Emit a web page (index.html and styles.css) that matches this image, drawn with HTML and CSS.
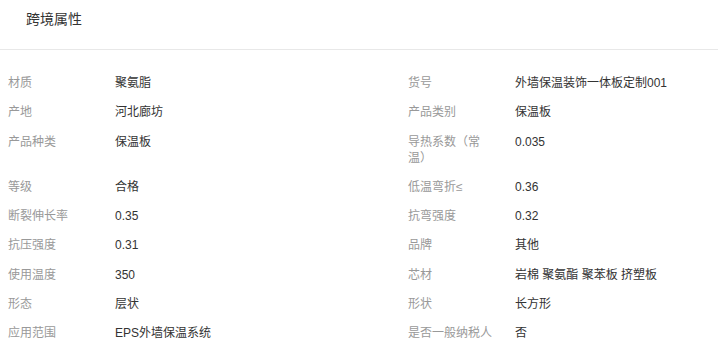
FILE: index.html
```html
<!DOCTYPE html>
<html lang="zh-CN">
<head>
<meta charset="utf-8">
<title>跨境属性</title>
<link rel="stylesheet" href="styles.css">
</head>
<body>
<div class="panel">
  <div class="panel-head"><span class="panel-title">跨境属性</span></div>
  <div class="attr-list">
    <div class="attr"><div class="attr-label">材质</div><div class="attr-value">聚氨脂</div></div>
    <div class="attr"><div class="attr-label">货号</div><div class="attr-value">外墙保温装饰一体板定制001</div></div>
    <div class="attr"><div class="attr-label">产地</div><div class="attr-value">河北廊坊</div></div>
    <div class="attr"><div class="attr-label">产品类别</div><div class="attr-value">保温板</div></div>
    <div class="attr"><div class="attr-label">产品种类</div><div class="attr-value">保温板</div></div>
    <div class="attr"><div class="attr-label">导热系数（常温）</div><div class="attr-value">0.035</div></div>
    <div class="attr"><div class="attr-label">等级</div><div class="attr-value">合格</div></div>
    <div class="attr"><div class="attr-label">低温弯折≤</div><div class="attr-value">0.36</div></div>
    <div class="attr"><div class="attr-label">断裂伸长率</div><div class="attr-value">0.35</div></div>
    <div class="attr"><div class="attr-label">抗弯强度</div><div class="attr-value">0.32</div></div>
    <div class="attr"><div class="attr-label">抗压强度</div><div class="attr-value">0.31</div></div>
    <div class="attr"><div class="attr-label">品牌</div><div class="attr-value">其他</div></div>
    <div class="attr"><div class="attr-label">使用温度</div><div class="attr-value">350</div></div>
    <div class="attr"><div class="attr-label">芯材</div><div class="attr-value">岩棉 聚氨酯 聚苯板 挤塑板</div></div>
    <div class="attr"><div class="attr-label">形态</div><div class="attr-value">层状</div></div>
    <div class="attr"><div class="attr-label">形状</div><div class="attr-value">长方形</div></div>
    <div class="attr"><div class="attr-label">应用范围</div><div class="attr-value">EPS外墙保温系统</div></div>
    <div class="attr"><div class="attr-label">是否一般纳税人</div><div class="attr-value">否</div></div>
  </div>
</div>
</body>
</html>
```

FILE: styles.css
```css
html, body {
  margin: 0;
  padding: 0;
  background: #fff;
}
body {
  font-family: "Liberation Sans", "Noto Sans CJK SC", sans-serif;
  font-size: 12px;
  color: #333;
}
.panel {
  width: 718px;
}
.panel-head {
  height: 50px;
  box-sizing: border-box;
  padding: 9px 26px 0;
  border-bottom: 1px solid #e8e8e8;
}
.panel-title {
  font-size: 14px;
  line-height: 20px;
  color: #333;
}
.attr-list {
  display: grid;
  grid-template-columns: 400px 310px;
  padding: 18px 0 0 8px;
}
.attr {
  display: flex;
  padding: 7px 0 6.3px;
  line-height: 16px;
}
.attr-label {
  width: 86px;
  flex: none;
  padding-right: 21px;
  color: #999;
}
.attr-value {
  color: #333;
}
```
